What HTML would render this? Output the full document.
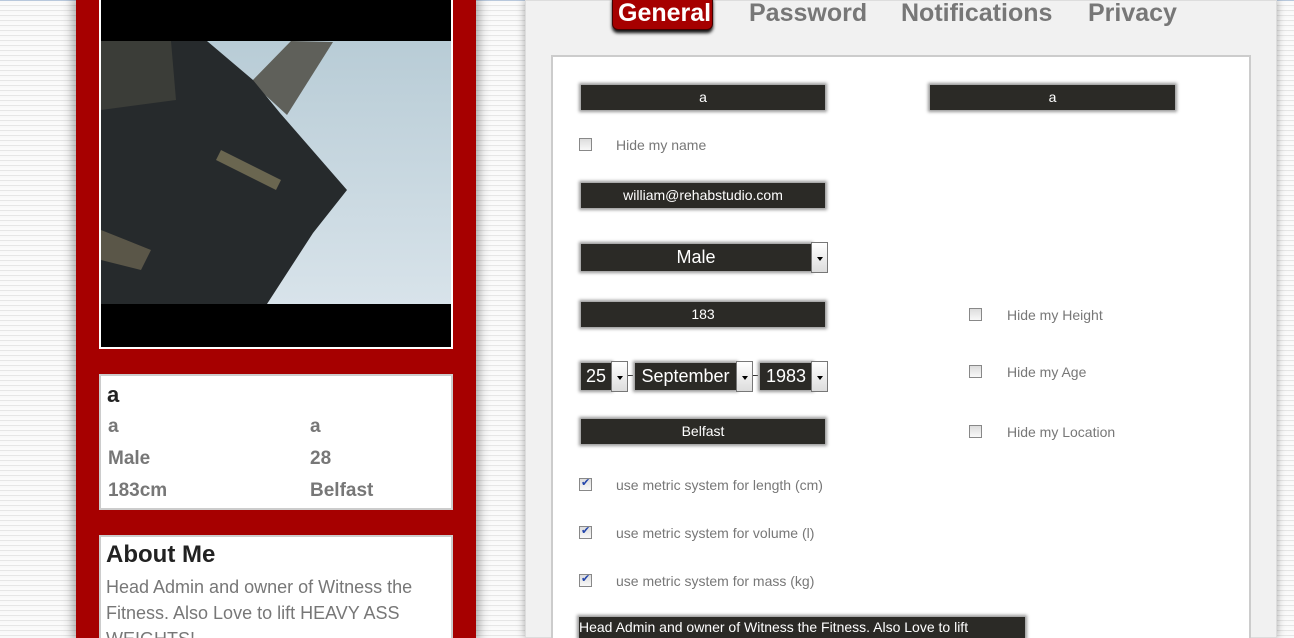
<!DOCTYPE html>
<html style="width:1294px;height:638px;overflow:hidden"><head><meta charset="utf-8"><style>
*{margin:0;padding:0;box-sizing:border-box}
body{width:1294px;height:638px;overflow:hidden;position:relative;font-family:"Liberation Sans","DejaVu Sans",sans-serif;
background:#f7f7f7 repeating-linear-gradient(0deg,#f9f9f9 0 2px,#e6e6e6 2px 3px,#fbfbfb 3px 5px);}
.topline{position:absolute;left:0;top:0;width:1294px;height:1px;background:#b8c8dc}
.side{position:absolute;left:76px;top:0;width:400px;height:638px;background:#a60000;box-shadow:0 0 10px 3px rgba(0,0,0,.35)}
.pic{position:absolute;left:99px;top:-2px;width:354px;height:351px;border:2px solid #fff;background:#000;overflow:hidden}
.card{position:absolute;left:99px;width:354px;background:#fff;border:2px solid #ccc;overflow:hidden}
.abs{position:absolute}
.g{color:#777;font-weight:bold;font-size:19px}
.panel{position:absolute;left:525px;top:0;width:752px;height:638px;background:#f1f1f1;border:1px solid #ddd;box-shadow:0 0 8px rgba(0,0,0,.35)}
.tab{position:absolute;top:-1px;font-size:25px;font-weight:bold;color:#777}
.inner{position:absolute;left:551px;top:55px;width:700px;height:600px;background:#fff;border:2px solid #ccc}
.inp{position:absolute;background:#2b2a26;color:#fff;text-align:center;box-shadow:0 0 3px 2px #999;font-size:14px;overflow:hidden;white-space:nowrap}
.cb{position:absolute;width:13px;height:13px;border:1px solid #888;background:linear-gradient(#ddd,#f8f8f8)}
.cb.on::after{content:"✔";position:absolute;left:1px;top:-3px;font-size:11px;color:#2244aa}
.lbl{position:absolute;color:#777;font-size:14px}
.dd{position:absolute;width:17px;border:1px solid #777;background:linear-gradient(#fff,#ddd)}
.dd::after{content:"";position:absolute;left:5px;top:50%;margin-top:-1px;border:3px solid transparent;border-top:4px solid #000}
</style></head><body>
<div class="topline"></div>
<div class="side"></div>
<div class="pic">
<svg width="350" height="351" style="position:absolute;left:0;top:0">
<defs><linearGradient id="sky" x1="0" y1="0" x2="0" y2="1"><stop offset="0" stop-color="#b8ccd6"/><stop offset="1" stop-color="#d8e3ea"/></linearGradient></defs>
<rect x="0" y="41" width="350" height="263" fill="url(#sky)"/>
<polygon points="150,82 190,41 232,42 186,115" fill="#5f605a"/>
<polygon points="0,41 106,41 152,80 179,113 246,190 212,233 166,304 0,304" fill="#262a2c"/>
<polygon points="0,41 70,41 75,100 0,110" fill="#3b3d38"/>
<polygon points="120,150 180,180 175,190 115,160" fill="#6a6650"/>
<polygon points="0,230 50,250 40,270 0,260" fill="#5a5648"/>
</svg>
</div>
<div class="card" style="top:374px;height:136px">
<div class="abs" style="left:6px;top:6px;font-size:22px;font-weight:bold;color:#222">a</div>
<div class="abs g" style="left:7px;top:40px">a</div><div class="abs g" style="left:209px;top:40px">a</div>
<div class="abs g" style="left:7px;top:72px">Male</div><div class="abs g" style="left:209px;top:72px">28</div>
<div class="abs g" style="left:7px;top:104px">183cm</div><div class="abs g" style="left:209px;top:104px">Belfast</div>
</div>
<div class="card" style="top:535px;height:110px">
<div class="abs" style="left:5px;top:4px;font-size:24px;font-weight:bold;color:#222">About Me</div>
<div class="abs" style="left:5px;top:37px;width:340px;font-size:18px;line-height:26px;color:#777">Head Admin and owner of Witness the Fitness. Also Love to lift HEAVY ASS WEIGHTS!</div>
</div>
<div class="panel"></div>
<div class="abs" style="left:612px;top:-6px;width:101px;height:36px;background:#a60000;border:1px solid #400;border-radius:6px;box-shadow:0 3px 3px #111"></div>
<div class="tab" style="left:618px;color:#fff">General</div>
<div class="tab" style="left:749px">Password</div>
<div class="tab" style="left:901px">Notifications</div>
<div class="tab" style="left:1088px">Privacy</div>
<div class="inner"></div>
<div class="inp" style="left:581px;top:85px;width:244px;height:25px;line-height:25px">a</div>
<div class="inp" style="left:930px;top:85px;width:245px;height:25px;line-height:25px">a</div>
<div class="cb" style="left:579px;top:138px"></div><div class="lbl" style="left:616px;top:137px">Hide my name</div>
<div class="inp" style="left:581px;top:183px;width:244px;height:25px;line-height:25px">william@rehabstudio.com</div>
<div class="inp" style="left:581px;top:244px;width:230px;height:27px;line-height:27px;font-size:18px">Male</div>
<div class="dd" style="left:811px;top:242px;height:31px"></div>
<div class="inp" style="left:581px;top:302px;width:244px;height:25px;line-height:25px">183</div>
<div class="cb" style="left:969px;top:308px"></div><div class="lbl" style="left:1007px;top:307px">Hide my Height</div>
<div class="inp" style="left:581px;top:363px;width:30px;height:27px;line-height:27px;font-size:18px">25</div>
<div class="dd" style="left:611px;top:361px;height:31px"></div>
<div class="abs" style="left:628px;top:375px;width:5px;height:1px;background:#333"></div>
<div class="inp" style="left:635px;top:363px;width:101px;height:27px;line-height:27px;font-size:18px">September</div>
<div class="dd" style="left:736px;top:361px;height:31px"></div>
<div class="abs" style="left:753px;top:375px;width:5px;height:1px;background:#333"></div>
<div class="inp" style="left:760px;top:363px;width:52px;height:27px;line-height:27px;font-size:18px">1983</div>
<div class="dd" style="left:811px;top:361px;height:31px"></div>
<div class="cb" style="left:969px;top:365px"></div><div class="lbl" style="left:1007px;top:364px">Hide my Age</div>
<div class="inp" style="left:581px;top:419px;width:244px;height:25px;line-height:25px">Belfast</div>
<div class="cb" style="left:969px;top:425px"></div><div class="lbl" style="left:1007px;top:424px">Hide my Location</div>
<div class="cb on" style="left:579px;top:478px"></div><div class="lbl" style="left:616px;top:477px">use metric system for length (cm)</div>
<div class="cb on" style="left:579px;top:526px"></div><div class="lbl" style="left:616px;top:525px">use metric system for volume (l)</div>
<div class="cb on" style="left:579px;top:574px"></div><div class="lbl" style="left:616px;top:573px">use metric system for mass (kg)</div>
<div class="inp" style="left:579px;top:617px;width:446px;height:21px;line-height:20px;text-align:left;font-size:14px">Head Admin and owner of Witness the Fitness. Also Love to lift</div>
</body></html>
